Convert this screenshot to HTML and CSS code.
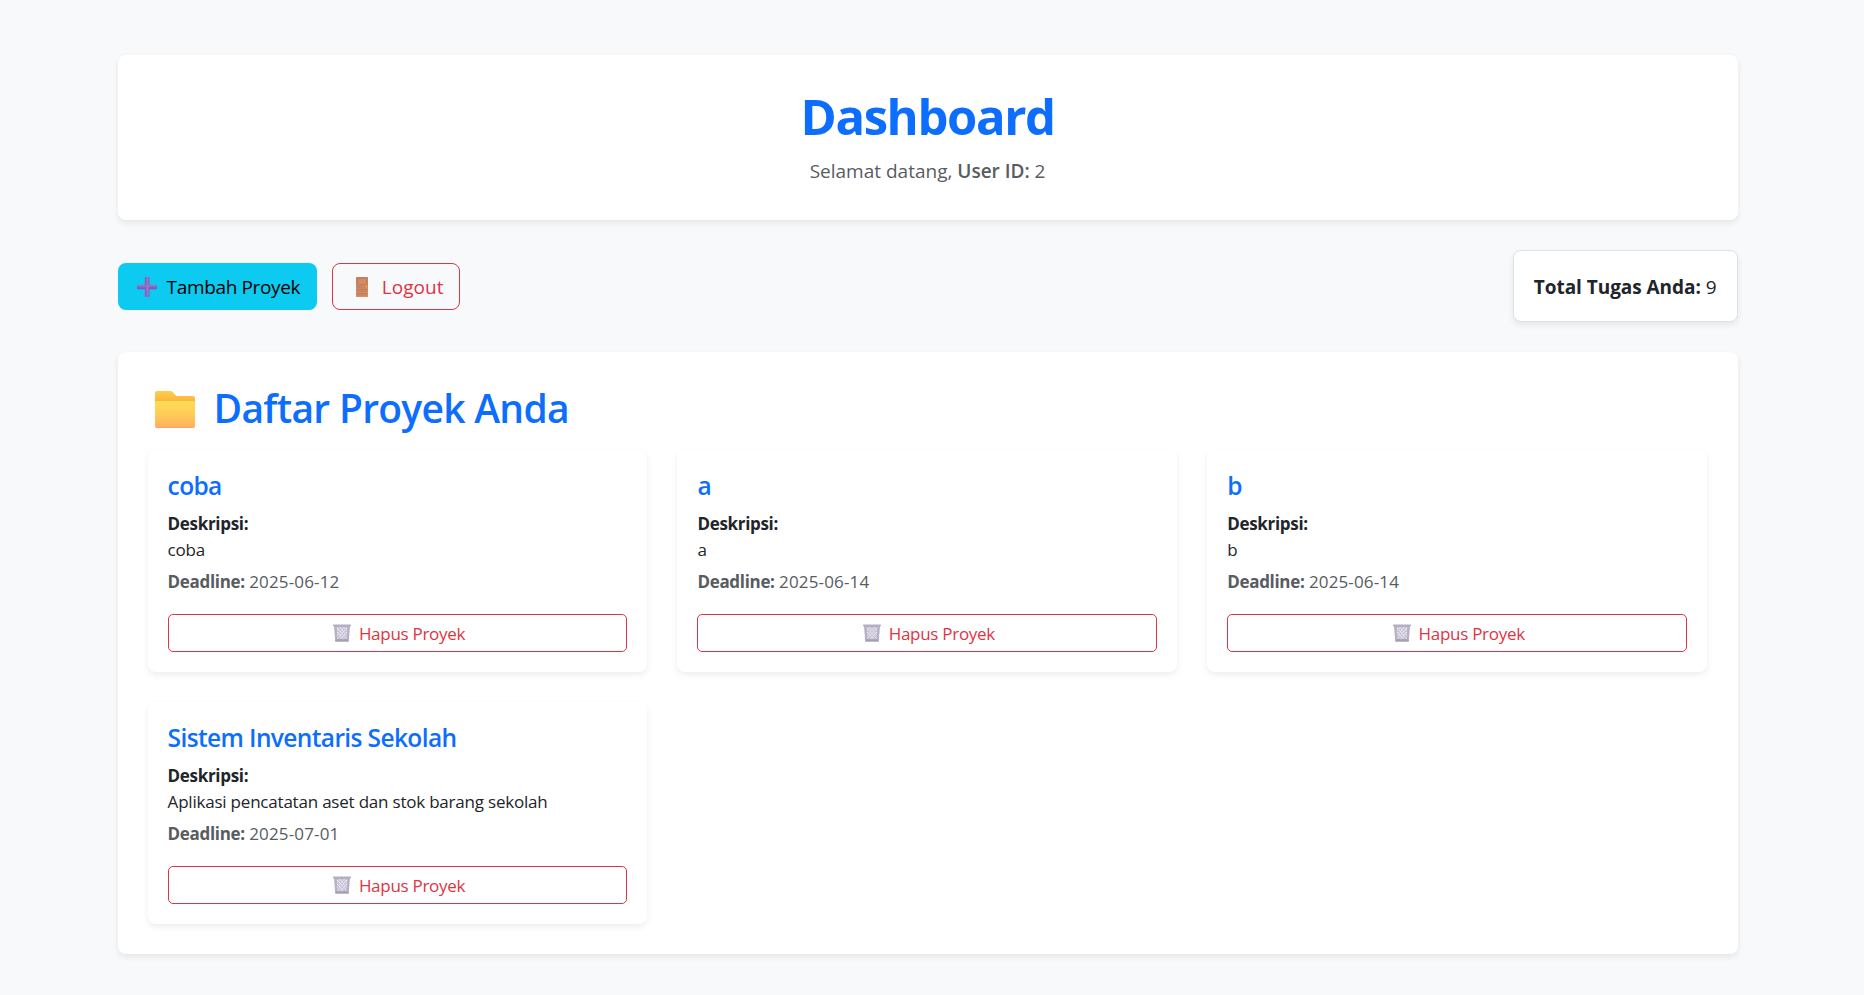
FILE: index.html
```html
<!DOCTYPE html>
<html lang="id">
<head>
<meta charset="utf-8">
<title>Dashboard</title>
<link rel="stylesheet" href="styles.css">
</head>
<body>
<svg class="defs" width="0" height="0" aria-hidden="true">
  <defs>
    <linearGradient id="plusH" x1="0" y1="0" x2="0" y2="1"><stop offset="0" stop-color="#8d7ab8"/><stop offset="1" stop-color="#8a45d0"/></linearGradient>
    <linearGradient id="plusV" x1="0" y1="0" x2="1" y2="0"><stop offset="0" stop-color="#8a55cc"/><stop offset=".6" stop-color="#8f74c0"/><stop offset="1" stop-color="#7c5aa6"/></linearGradient>
    <linearGradient id="folderBack" x1="0" y1="0" x2="0" y2="1"><stop offset="0" stop-color="#ffcf4a"/><stop offset=".3" stop-color="#fdb43e"/><stop offset="1" stop-color="#fb9f5a"/></linearGradient>
    <linearGradient id="folderFront" x1="0" y1="0" x2="0" y2="1"><stop offset="0" stop-color="#ffdd55"/><stop offset=".4" stop-color="#ffd057"/><stop offset=".93" stop-color="#ffb35c"/><stop offset="1" stop-color="#ff9d70"/></linearGradient>
    <linearGradient id="doorFill" x1="0" y1="0" x2="0" y2="1"><stop offset="0" stop-color="#c47f60"/><stop offset="1" stop-color="#d69068"/></linearGradient>
    <symbol id="trash" viewBox="0 0 18 18">
      <path d="M1 2h16l-1.300 15.500H2.300z" fill="#b5b0c6"/>
      <path d="M3.500 3h11L13.700 15H4.300z" fill="#c6c1d4"/>
      <path d="M4 4l9.500 10.500M7 3.500l7 8M11 3.500l3 3.500M4 8l6.500 7M14 4L4.500 14.500M11 3.500l-7 8M7 3.500L4 7M14 8l-6.500 7" stroke="#f6f5fa" stroke-width="1" stroke-dasharray="1.500 1" fill="none"/>
      <rect x="0" y="0.500" width="18" height="2" rx=".8" fill="#b3aec0"/>
      <rect x="2.300" y="15.500" width="13.400" height="2" rx=".6" fill="#a39fb2"/>
    </symbol>
  </defs>
</svg>
<main class="container">
  <header class="panel hero">
    <h1 class="hero-title">Dashboard</h1>
    <p class="hero-sub">Selamat datang, <strong>User ID:</strong> 2</p>
  </header>

  <div class="toolbar">
    <div class="actions">
      <a class="btn btn-add"><svg class="btn-icon" viewBox="0 0 20 20"><rect x="0" y="7.700" width="20" height="4.600" rx="1.300" fill="url(#plusH)"/><rect x="7.800" y="0" width="4.600" height="20" rx="1.300" fill="url(#plusV)"/><path d="M10.800 1v17M1 8.900h18" stroke="#a39ac4" stroke-width=".7" opacity=".7"/></svg><span>Tambah Proyek</span></a>
      <a class="btn btn-logout"><svg class="btn-icon" viewBox="0 0 20 20"><rect x="4" y="0" width="12" height="20" rx=".6" fill="url(#doorFill)"/><path d="M5.500 1.500h9v6h-9zM5.500 10h7.500M5.500 12.500h9v1.500h-9zM5.500 16.500h9v1.500h-9z" stroke="#b87556" stroke-width=".6" fill="#d08c67"/><circle cx="14.300" cy="9.600" r="1" fill="#f5a33a"/></svg><span>Logout</span></a>
    </div>
    <div class="total"><strong>Total Tugas Anda:</strong> 9</div>
  </div>

  <section class="panel projects">
    <h2 class="section-title"><svg class="folder" viewBox="0 0 40 37"><path d="M0 2Q0 0 2 0h13.500q1.500 0 2.500 1.200l2.300 2.800q.9 1 2.200 1H38q2 0 2 2v26H0z" fill="url(#folderBack)"/><rect x="0" y="10" width="40" height="27" rx="2" fill="url(#folderFront)"/></svg><span>Daftar Proyek Anda</span></h2>
    <div class="grid">
      <article class="card">
        <h5 class="card-title">coba</h5>
        <p class="desc"><strong>Deskripsi:</strong><br>coba</p>
        <p class="deadline"><strong>Deadline:</strong> <span>2025-06-12</span></p>
        <button class="btn-delete"><svg class="trash"><use href="#trash"/></svg><span>Hapus Proyek</span></button>
      </article>
      <article class="card">
        <h5 class="card-title">a</h5>
        <p class="desc"><strong>Deskripsi:</strong><br>a</p>
        <p class="deadline"><strong>Deadline:</strong> <span>2025-06-14</span></p>
        <button class="btn-delete"><svg class="trash"><use href="#trash"/></svg><span>Hapus Proyek</span></button>
      </article>
      <article class="card">
        <h5 class="card-title">b</h5>
        <p class="desc"><strong>Deskripsi:</strong><br>b</p>
        <p class="deadline"><strong>Deadline:</strong> <span>2025-06-14</span></p>
        <button class="btn-delete"><svg class="trash"><use href="#trash"/></svg><span>Hapus Proyek</span></button>
      </article>
      <article class="card">
        <h5 class="card-title">Sistem Inventaris Sekolah</h5>
        <p class="desc"><strong>Deskripsi:</strong><br>Aplikasi pencatatan aset dan stok barang sekolah</p>
        <p class="deadline"><strong>Deadline:</strong> <span>2025-07-01</span></p>
        <button class="btn-delete"><svg class="trash"><use href="#trash"/></svg><span>Hapus Proyek</span></button>
      </article>
    </div>
  </section>
</main>
</body>
</html>
```
FILE: styles.css
```css
* { box-sizing: border-box; }

body {
  margin: 0;
  min-height: 995px;
  background: #f8f9fb;
  color: #212529;
  font: 400 17px/26px "Open Sans", "Noto Sans", sans-serif;
}

h1, h2, h5, p { margin: 0; }
svg { display: block; flex: none; }
.defs { position: absolute; }

.container {
  width: 1620px;
  margin-left: 117.6px;
  padding-top: 55px;
}

.panel {
  background: #fff;
  border-radius: 8px;
  box-shadow: 0 3px 6px rgba(0, 0, 0, .08);
}

.hero {
  height: 165px;
  padding: 31px 30px 30px;
  text-align: center;
}
.hero-title {
  margin-bottom: 9px;
  color: #0d6efd;
  font-size: 49px;
  font-weight: 700;
  line-height: 61px;
  letter-spacing: -1.4px;
}
.hero-sub {
  color: #585c5f;
  font-size: 19px;
  line-height: 30px;
}
.hero-sub strong { font-weight: 600; }

.toolbar {
  display: flex;
  align-items: center;
  justify-content: space-between;
  margin: 30px 0;
}
.actions { display: flex; gap: 15px; }

.btn {
  display: flex;
  align-items: center;
  height: 47px;
  border-radius: 8px;
  font-size: 19px;
  line-height: 30px;
}
.btn-icon { width: 20px; height: 20px; margin-right: 10px; }
.btn-add {
  padding: 1px 17px 0 19px;
  background: #0dcaf0;
  color: #000;
  letter-spacing: -.35px;
}
.btn-logout {
  padding: 1px 15.5px 0 19px;
  border: 1px solid #dc3545;
  color: #dc3545;
  letter-spacing: .05px;
}
.btn-logout .btn-icon { margin-right: 9.500px; }

.total {
  height: 72px;
  padding: 20px 20px 0;
  border: 1px solid #dee2e6;
  border-radius: 8px;
  background: #fff;
  box-shadow: 0 3px 6px rgba(0, 0, 0, .08);
  font-size: 19px;
  line-height: 32px;
}
.total strong { letter-spacing: -.05px; }

.projects { padding: 30px 30.5px 30px 30px; }
.section-title {
  display: flex;
  align-items: center;
  gap: 19px;
  margin-bottom: 18px;
  padding-left: 7px;
  color: #0d6efd;
  font-size: 39px;
  font-weight: 600;
  line-height: 50px;
  letter-spacing: -.72px;
}
.section-title span { padding-top: 1px; margin-bottom: -1px; }
.folder { width: 40px; height: 37px; margin-top: 5px; }

.grid {
  display: grid;
  grid-template-columns: repeat(3, 1fr);
  gap: 30px;
}
.card {
  height: 222px;
  padding: 21px 20px 20px;
  border-radius: 8px;
  background: #fff;
  box-shadow: 0 3px 6px rgba(0, 0, 0, .07);
}
.card-title {
  margin-bottom: 10.4px;
  color: #0d6efd;
  font-size: 24.5px;
  font-weight: 600;
  line-height: 30px;
  letter-spacing: -.62px;
}
.desc {
  margin-bottom: 6px;
  letter-spacing: -.21px;
}
.desc strong, .deadline strong { letter-spacing: -.32px; }
.deadline {
  margin-bottom: 18.6px;
  color: #585c5f;
}
.deadline span { letter-spacing: .15px; }

.btn-delete {
  display: flex;
  align-items: center;
  justify-content: center;
  gap: 8px;
  width: 100%;
  height: 38px;
  padding: 1px 0 0 3px;
  border: 1px solid #dc3545;
  border-radius: 5px;
  background: transparent;
  color: #dc3545;
  font: inherit;
  letter-spacing: -.29px;
}
.btn-delete span { padding-top: 1px; }
.trash { width: 18px; height: 18px; }
```
